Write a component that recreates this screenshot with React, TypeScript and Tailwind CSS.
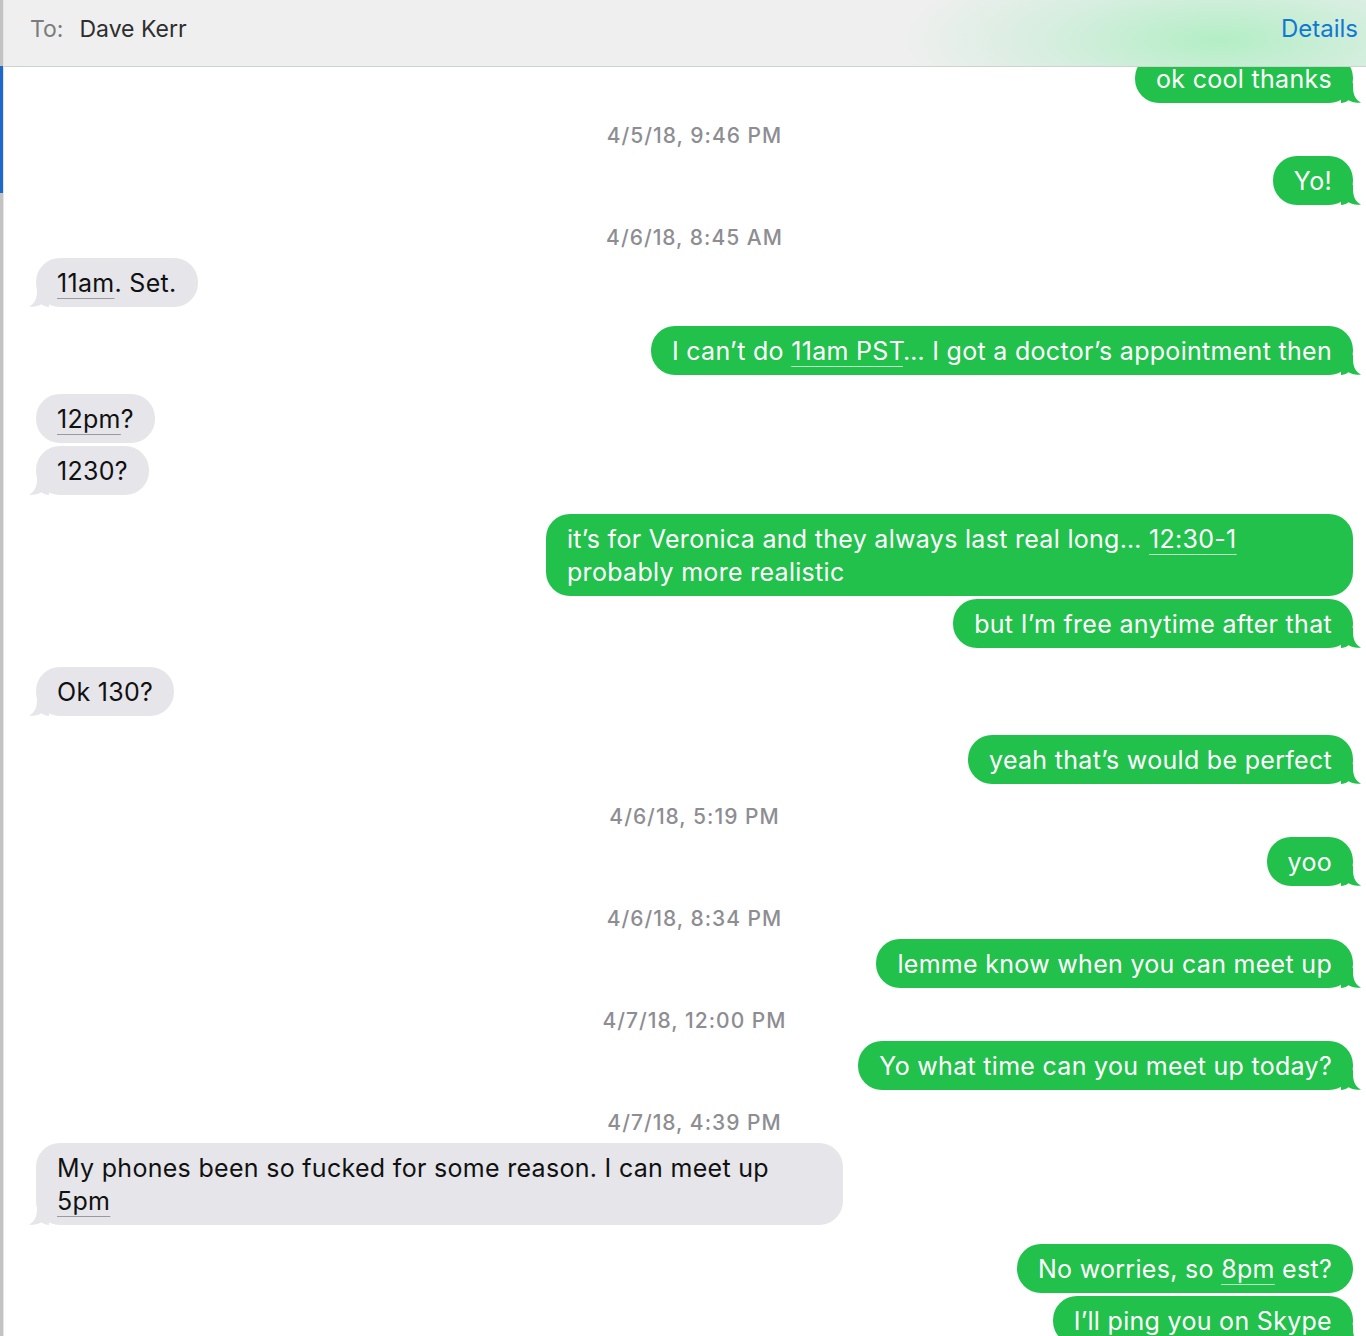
import type { ReactNode } from 'react';

type Item =
  | { kind: 'time'; text: string }
  | { kind: 'msg'; from: 'me' | 'them'; body: ReactNode; tail?: boolean; wide?: boolean };

const greenLink = 'underline decoration-white/70 decoration-1 underline-offset-[6px]';
const grayLink = 'underline decoration-[#9a9a9e] decoration-1 underline-offset-[6px]';

const items: Item[] = [
  { kind: 'msg', from: 'me', body: 'ok cool thanks', tail: true },
  { kind: 'time', text: '4/5/18, 9:46 PM' },
  { kind: 'msg', from: 'me', body: 'Yo!', tail: true },
  { kind: 'time', text: '4/6/18, 8:45 AM' },
  {
    kind: 'msg',
    from: 'them',
    tail: true,
    body: (
      <>
        <span className={grayLink}>11am</span>. Set.
      </>
    ),
  },
  {
    kind: 'msg',
    from: 'me',
    tail: true,
    body: (
      <>
        I can’t do <span className={greenLink}>11am PST</span>… I got a doctor’s appointment then
      </>
    ),
  },
  {
    kind: 'msg',
    from: 'them',
    body: (
      <>
        <span className={grayLink}>12pm</span>?
      </>
    ),
  },
  { kind: 'msg', from: 'them', body: '1230?', tail: true },
  {
    kind: 'msg',
    from: 'me',
    wide: true,
    body: (
      <>
        it’s for Veronica and they always last real long… <span className={greenLink}>12:30-1</span>
        <br />
        probably more realistic
      </>
    ),
  },
  { kind: 'msg', from: 'me', body: 'but I’m free anytime after that', tail: true },
  { kind: 'msg', from: 'them', body: 'Ok 130?', tail: true },
  { kind: 'msg', from: 'me', body: 'yeah that’s would be perfect', tail: true },
  { kind: 'time', text: '4/6/18, 5:19 PM' },
  { kind: 'msg', from: 'me', body: 'yoo', tail: true },
  { kind: 'time', text: '4/6/18, 8:34 PM' },
  { kind: 'msg', from: 'me', body: 'lemme know when you can meet up', tail: true },
  { kind: 'time', text: '4/7/18, 12:00 PM' },
  { kind: 'msg', from: 'me', body: 'Yo what time can you meet up today?', tail: true },
  { kind: 'time', text: '4/7/18, 4:39 PM' },
  {
    kind: 'msg',
    from: 'them',
    wide: true,
    tail: true,
    body: (
      <>
        My phones been so fucked for some reason. I can meet up
        <br />
        <span className={grayLink}>5pm</span>
      </>
    ),
  },
  {
    kind: 'msg',
    from: 'me',
    body: (
      <>
        No worries, so <span className={greenLink}>8pm</span> est?
      </>
    ),
  },
  { kind: 'msg', from: 'me', body: 'I’ll ping you on Skype', tail: true },
];

const Tail = ({ side, color }: { side: 'left' | 'right'; color: string }) => (
  <svg
    width="20"
    height="20"
    viewBox="0 0 20 20"
    className={
      side === 'right'
        ? 'absolute -right-[8px] bottom-0'
        : 'absolute -left-[7px] bottom-0 -scale-x-100'
    }
  >
    <path
      d="M0 0 H12 V4 C12 12 15 17.5 20 19.5 C15 20.3 11 19.4 7.5 17.3 C5 19.3 2.5 20 0 20 Z"
      fill={color}
    />
  </svg>
);

const Bubble = ({ item }: { item: Extract<Item, { kind: 'msg' }> }) => {
  const me = item.from === 'me';
  return (
    <div className={me ? 'flex justify-end' : 'flex justify-start'}>
      <div
        className={`relative rounded-[24px] px-[21px] pb-[7px] pt-[9px] text-[25px] leading-[33px] tracking-[0.3px] ${
          item.wide ? 'w-[807px]' : ''
        } ${me ? 'bg-[#22c14c] text-white' : 'bg-[#e5e5ea] text-[#111]'}`}
      >
        {item.tail && <Tail side={me ? 'right' : 'left'} color={me ? '#22c14c' : '#e5e5ea'} />}
        <span className="relative">{item.body}</span>
      </div>
    </div>
  );
};

const App = () => {
  return (
    <div
      className="flex h-[1336px] w-[1366px] overflow-hidden bg-white"
      style={{ fontFamily: 'Inter, "Noto Sans", sans-serif' }}
    >
      {/* sidebar edge */}
      <div className="flex w-[4px] shrink-0 flex-col border-r border-[#e4e4e4] bg-[#c3c3c3]">
        <div className="h-[66px]" />
        <div className="h-[127px] bg-[#1c68cc]" />
      </div>

      <div className="flex min-w-0 flex-1 flex-col">
        <header className="relative z-10 flex h-[67px] shrink-0 items-start justify-between border-b border-[#cfd3d0] bg-[#efefef] bg-[radial-gradient(320px_95px_at_1215px_40px,#b3eec5_0%,#d7eee0_55%,#efefef_100%)] pl-[26px] pr-[8px] pt-[14px] text-[23px] leading-[30px]">
          <div className="flex items-baseline gap-[16px]">
            <span className="text-[#7c7c7c]">To:</span>
            <span className="text-[#2e2e2e]">Dave Kerr</span>
          </div>
          <span className="text-[24px] text-[#1278d2]">Details</span>
        </header>

        <main className="flex-1 overflow-hidden">
          <div className="-mt-[13px] flex flex-col pl-[32px] pr-[13px]">
            {items.map((item, i) => {
              const prev = items[i - 1];
              if (item.kind === 'time') {
                return (
                  <div
                    key={i}
                    className="mt-[22px] text-center text-[21px] font-medium leading-[21px] tracking-[1px] text-[#8d8d92]"
                  >
                    {item.text}
                  </div>
                );
              }
              let mt = 'mt-0';
              if (prev) {
                if (prev.kind === 'time') mt = 'mt-[10px]';
                else if (prev.from === item.from) mt = 'mt-[3px]';
                else mt = 'mt-[19px]';
              }
              return (
                <div key={i} className={mt}>
                  <Bubble item={item} />
                </div>
              );
            })}
          </div>
        </main>
      </div>
    </div>
  );
};

export default App;
